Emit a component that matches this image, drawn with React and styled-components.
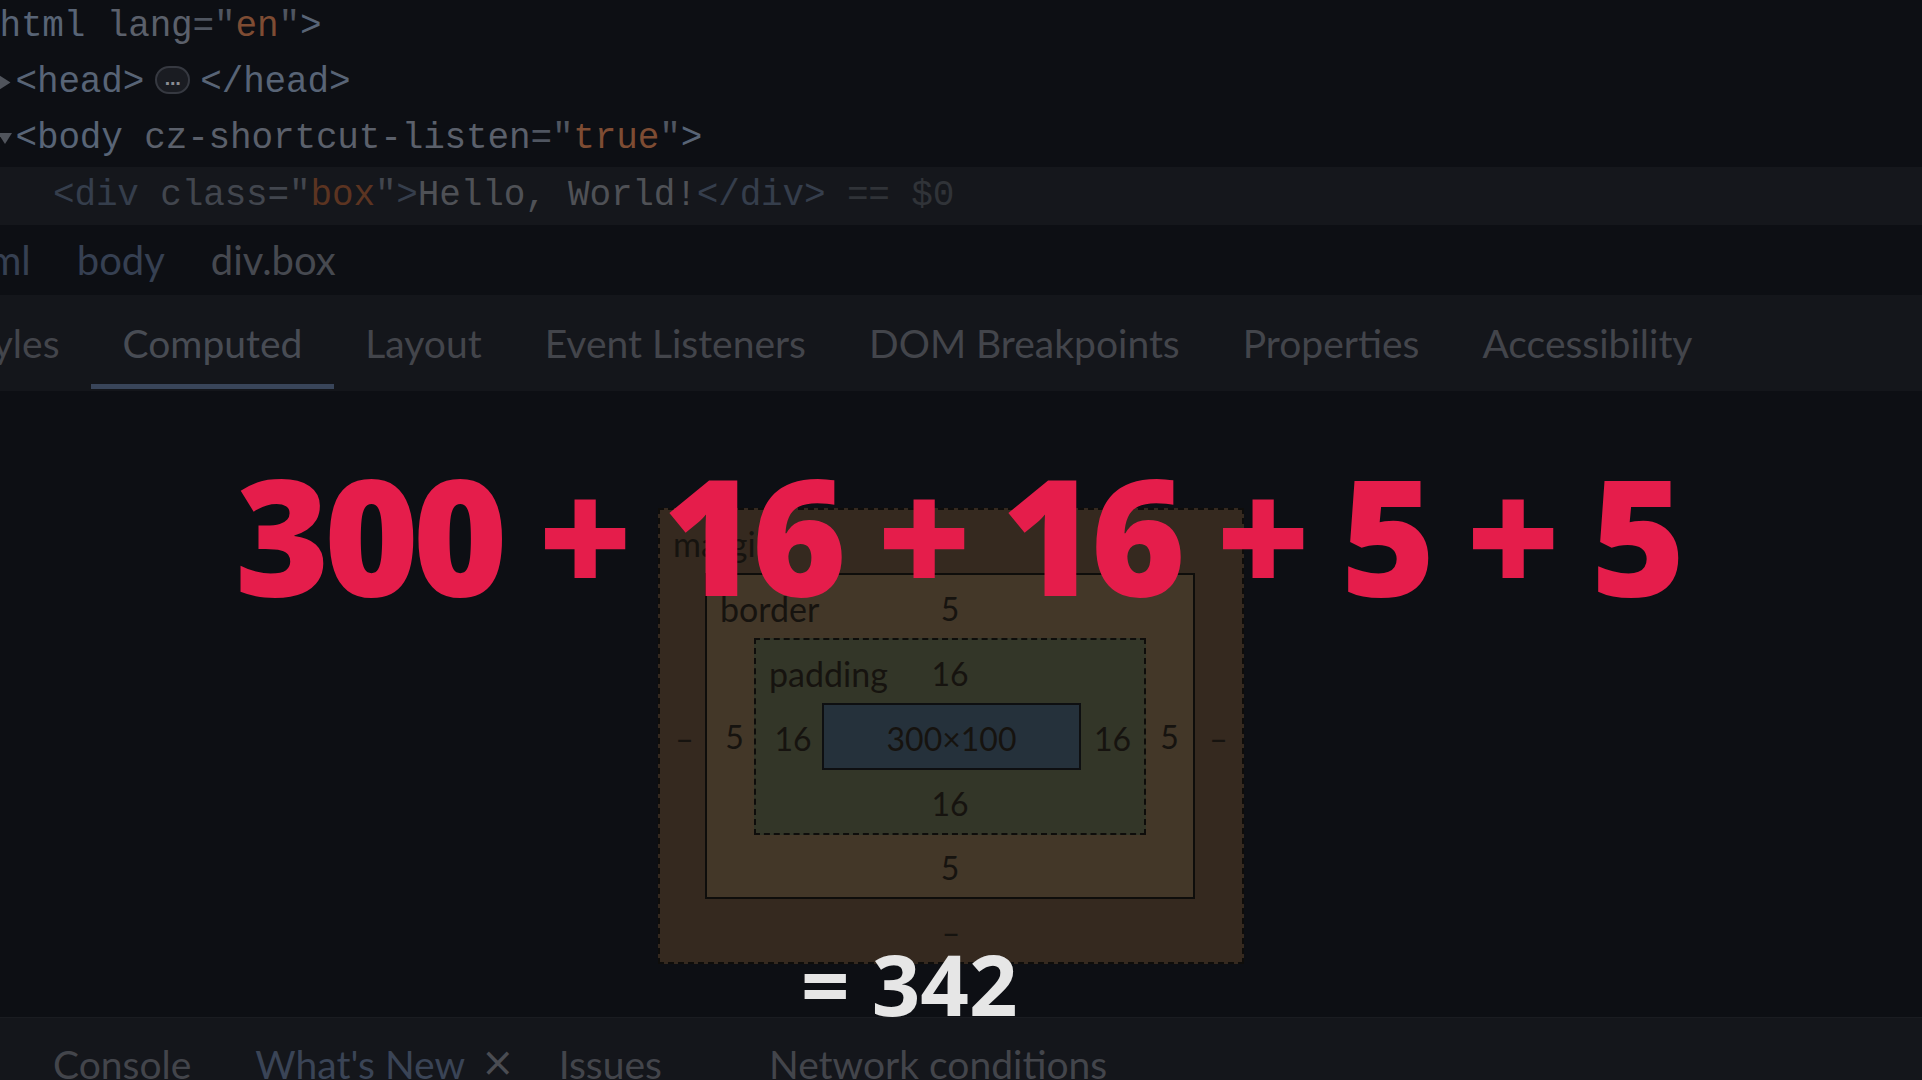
import styled, { createGlobalStyle } from 'styled-components'

const GlobalStyle = createGlobalStyle`
  html, body {
    margin: 0;
    padding: 0;
    background: #0d0f14;
    overflow: hidden;
  }
`

const Screen = styled.div`
  position: relative;
  width: 1922px;
  height: 1080px;
  display: flex;
  flex-direction: column;
  background: #0d0f14;
  overflow: hidden;
`

/* elements tree */
const ElementsTree = styled.div`
  margin-top: -1px;
  margin-left: -22px;
  font-family: "Liberation Mono", monospace;
  font-size: 36px;
  letter-spacing: -0.15px;
`
const CodeLine = styled.div`
  height: ${p => (p.$selected ? 58 : 56)}px;
  line-height: ${p => (p.$selected ? 58 : 56)}px;
  padding-left: ${p => p.$depth * 37.5}px;
  background: ${p => (p.$selected ? '#15171c' : 'transparent')};
  white-space: pre;
`
const Arrow = styled.span`
  display: inline-block;
  vertical-align: middle;
  width: 0;
  height: 0;
  margin-left: -18px;
  margin-right: 4px;
  border-left: 7px solid transparent;
  border-right: 7px solid transparent;
  border-top: 11px solid #50545c;
  transform: ${p => (p.$open ? 'none' : 'rotate(-90deg)')};
`
const colors = {
  tag: '#586476',
  attr: '#5b606b',
  punct: '#4f5560',
  value: '#7e4c33',
  dimTag: '#353e4c',
  dimAttr: '#42464e',
  dimValue: '#5c3421',
  dimText: '#4f5156',
  ref: '#303338',
}
const Tok = styled.span`
  color: ${p => colors[p.$k]};
`
const Ellipsis = styled.span`
  display: inline-flex;
  vertical-align: middle;
  align-items: center;
  justify-content: center;
  box-sizing: border-box;
  width: 35px;
  height: 28px;
  margin: -4px 10px 0 11px;
  border: 2px solid #363941;
  border-radius: 14px;
  background: #1a1c22;
  color: #8a8d94;
  font-family: "DejaVu Sans", sans-serif;
  font-size: 16px;
  font-weight: bold;
  line-height: 1;
`

/* breadcrumbs */
const Breadcrumbs = styled.div`
  height: 70px;
  display: flex;
  align-items: center;
  gap: 46px;
  font-family: Lato, sans-serif;
  font-size: 40px;
  margin-left: -48px;
`
const Crumb = styled.span`
  color: ${p => (p.$last ? '#464950' : '#364052')};
`

/* sidebar tabs */
const TabStrip = styled.div`
  height: 96px;
  display: flex;
  align-items: stretch;
  background: #14161b;
  margin-left: -73px;
  font-family: Lato, sans-serif;
  font-size: 39px;
`
const Tab = styled.div`
  position: relative;
  display: flex;
  align-items: center;
  padding: 0 31.5px;
  color: ${p => (p.$active ? '#484c54' : '#43454b')};
  &::after {
    content: '';
    display: ${p => (p.$active ? 'block' : 'none')};
    position: absolute;
    left: 0;
    right: 0;
    bottom: 2px;
    height: 5px;
    background: #39455a;
  }
`

/* computed pane with box model */
const Pane = styled.div`
  flex: 1;
  padding: 117px 0 0 658px;
  font-family: Lato, sans-serif;
  font-size: 32px;
  color: #16130f;
`
const Layer = styled.div`
  box-sizing: border-box;
  width: ${p => p.$w}px;
  height: ${p => p.$h}px;
  display: grid;
  grid-template-columns: ${p => p.$cols};
  grid-template-rows: ${p => p.$rows};
  background: ${p => p.$bg};
  border: 2px ${p => p.$line} #0e0d0b;
`
const TopRow = styled.div`
  grid-column: 1 / -1;
  display: grid;
  grid-template-columns: 1fr auto 1fr;
  align-items: center;
  padding-top: 4px;
`
const Label = styled.span`
  padding-left: 13px;
  font-size: 34px;
`
const Side = styled.div`
  display: flex;
  align-items: center;
  justify-content: center;
  padding-top: 4px;
  padding-left: ${p => p.$shift || 0}px;
`
const BottomRow = styled.div`
  grid-column: 1 / -1;
  display: flex;
  align-items: center;
  justify-content: center;
  padding-top: ${p => 4 + (p.$drop || 0)}px;
`
const Content = styled.div`
  box-sizing: border-box;
  width: 259px;
  height: 67px;
  display: flex;
  align-items: center;
  justify-content: center;
  padding-top: 4px;
  background: #25313b;
  border: 2px solid #0e0f11;
`

/* overlays */
const Sum = styled.div`
  position: absolute;
  left: 235px;
  top: 452px;
  font-family: "Open Sans", sans-serif;
  font-weight: 800;
  font-size: 162px;
  line-height: 1;
  letter-spacing: -6px;
  color: #e51d4b;
  white-space: pre;
`
const Total = styled.div`
  position: absolute;
  left: 801px;
  top: 941px;
  font-family: "Open Sans", sans-serif;
  font-weight: 700;
  font-size: 85px;
  line-height: 1;
  color: #e6e6e6;
  white-space: pre;
`

/* drawer */
const Drawer = styled.div`
  height: 63px;
  box-sizing: border-box;
  display: flex;
  padding: 27px 0 0 21px;
  background: #14161b;
  border-top: 1px solid #1a1c21;
  font-family: Lato, sans-serif;
  font-size: 39px;
  line-height: 1;
  overflow: hidden;
`
const DrawerTab = styled.div`
  display: flex;
  padding: 0 ${p => p.$right ?? 32}px 0 32px;
  color: ${p => (p.$active ? '#3a4456' : '#43454b')};
  white-space: pre;
`
const Close = styled.span`
  margin-left: 16px;
  margin-top: -3px;
  color: #4a4c52;
  font-family: "DejaVu Sans", sans-serif;
  font-size: 40px;
`

const tabs = ['Styles', 'Computed', 'Layout', 'Event Listeners', 'DOM Breakpoints', 'Properties', 'Accessibility']

const App = () => {
  return (
    <>
      <GlobalStyle />
      <Screen>
        <ElementsTree>
          <CodeLine $depth={0}>
            <Tok $k="tag">&lt;html</Tok>{' '}<Tok $k="attr">lang</Tok><Tok $k="punct">="</Tok><Tok $k="value">en</Tok><Tok $k="punct">"</Tok><Tok $k="tag">&gt;</Tok>
          </CodeLine>
          <CodeLine $depth={1}>
            <Arrow />
            <Tok $k="tag">&lt;head&gt;</Tok><Ellipsis>…</Ellipsis><Tok $k="tag">&lt;/head&gt;</Tok>
          </CodeLine>
          <CodeLine $depth={1}>
            <Arrow $open />
            <Tok $k="tag">&lt;body</Tok>{' '}<Tok $k="attr">cz-shortcut-listen</Tok><Tok $k="punct">="</Tok><Tok $k="value">true</Tok><Tok $k="punct">"</Tok><Tok $k="tag">&gt;</Tok>
          </CodeLine>
          <CodeLine $depth={2} $selected>
            <Tok $k="dimTag">&lt;div</Tok>{' '}<Tok $k="dimAttr">class</Tok><Tok $k="dimAttr">="</Tok><Tok $k="dimValue">box</Tok><Tok $k="dimAttr">"</Tok><Tok $k="dimTag">&gt;</Tok><Tok $k="dimText">Hello, World!</Tok><Tok $k="dimTag">&lt;/div&gt;</Tok><Tok $k="ref"> == $0</Tok>
          </CodeLine>
        </ElementsTree>

        <Breadcrumbs>
          <Crumb>html</Crumb>
          <Crumb>body</Crumb>
          <Crumb $last>div.box</Crumb>
        </Breadcrumbs>

        <TabStrip>
          {tabs.map(t => (
            <Tab key={t} $active={t === 'Computed'}>{t}</Tab>
          ))}
        </TabStrip>

        <Pane>
          <Layer $w={586} $h={456} $cols="45px 1fr 47px" $rows="63px 326px 63px" $bg="#35291f" $line="dashed">
            <TopRow><Label>margin</Label><span>–</span><span /></TopRow>
            <Side $shift={4}>–</Side>
            <Layer $w={490} $h={326} $cols="47px 1fr 47px" $rows="63px 193px 62px" $bg="#433728" $line="solid">
              <TopRow><Label>border</Label><span>5</span><span /></TopRow>
              <Side $shift={8}>5</Side>
              <Layer $w={392} $h={197} $cols="66px 1fr 63px" $rows="63px 67px 63px" $bg="#333628" $line="dashed">
                <TopRow><Label>padding</Label><span>16</span><span /></TopRow>
                <Side $shift={8}>16</Side>
                <Content>300×100</Content>
                <Side>16</Side>
                <BottomRow>16</BottomRow>
              </Layer>
              <Side>5</Side>
              <BottomRow $drop={6}>5</BottomRow>
            </Layer>
            <Side>–</Side>
            <BottomRow>–</BottomRow>
          </Layer>
        </Pane>

        <Drawer>
          <DrawerTab>Console</DrawerTab>
          <DrawerTab $active $right={12}>What's New<Close>×</Close></DrawerTab>
          <DrawerTab $right={75}>Issues</DrawerTab>
          <DrawerTab>Network conditions</DrawerTab>
        </Drawer>

        <Sum>300 + 16 + 16 + 5 + 5</Sum>
        <Total>= 342</Total>
      </Screen>
    </>
  )
}

export default App
